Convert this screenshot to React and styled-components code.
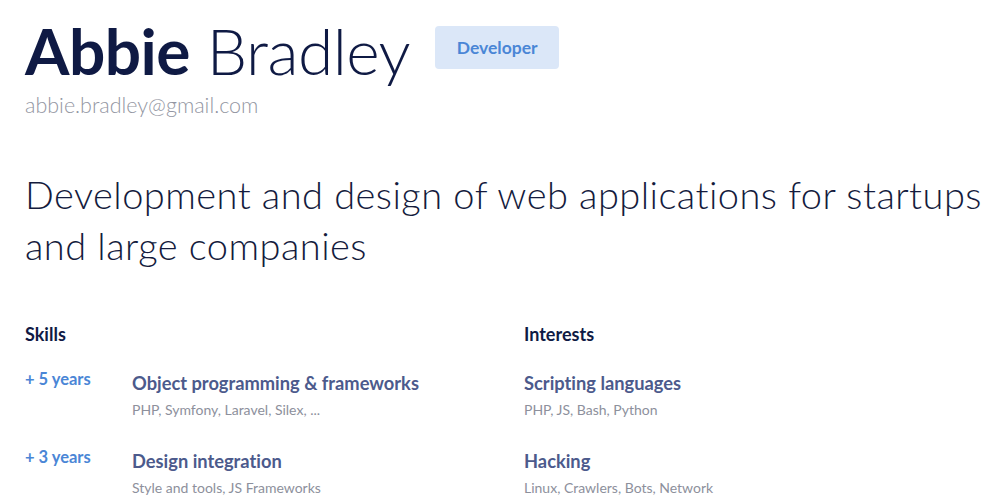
import React from "react";
import styled, { createGlobalStyle } from "styled-components";

const GlobalStyle = createGlobalStyle`
  body {
    margin: 0;
    background: #ffffff;
    font-family: Lato, "Noto Sans", sans-serif;
    font-variant-ligatures: none;
  }
`;

const skills = [
  { years: "+ 5 years", title: "Object programming & frameworks", detail: "PHP, Symfony, Laravel, Silex, ..." },
  { years: "+ 3 years", title: "Design integration", detail: "Style and tools, JS Frameworks" },
];

const interests = [
  { title: "Scripting languages", detail: "PHP, JS, Bash, Python" },
  { title: "Hacking", detail: "Linux, Crawlers, Bots, Network" },
];

const App = () => {
  return (
    <>
      <GlobalStyle />
      <Page>
        <Header>
          <Name>
            <strong>Abbie</strong> Bradley
          </Name>
          <Badge>Developer</Badge>
        </Header>
        <Email>abbie.bradley@gmail.com</Email>
        <Tagline>Development and design of web applications for startups and large companies</Tagline>
        <Columns>
          <Column>
            <Heading>Skills</Heading>
            {skills.map((s) => (
              <Row key={s.title}>
                <Years>{s.years}</Years>
                <Item>
                  <Title>{s.title}</Title>
                  <Detail>{s.detail}</Detail>
                </Item>
              </Row>
            ))}
          </Column>
          <Column>
            <Heading>Interests</Heading>
            {interests.map((i) => (
              <Row key={i.title}>
                <Item>
                  <Title>{i.title}</Title>
                  <Detail>{i.detail}</Detail>
                </Item>
              </Row>
            ))}
          </Column>
        </Columns>
      </Page>
    </>
  );
};

const Page = styled.div`
  padding: 13px 17px 0 25px;
  height: 500px;
  box-sizing: border-box;
  overflow: hidden;
`;

const Header = styled.div`
  display: flex;
  align-items: flex-start;
  gap: 25px;
`;

const Name = styled.h1`
  margin: 0;
  font-size: 64px;
  line-height: 1.2;
  font-weight: 300;
  color: #0f1a44;
  letter-spacing: -0.5px;
  strong {
    font-weight: 700;
  }
`;

const Badge = styled.span`
  margin-top: 13px;
  width: 124px;
  height: 43px;
  display: flex;
  align-items: center;
  justify-content: center;
  background: #dbe7f8;
  border-radius: 4px;
  color: #4a86d6;
  font-size: 17.5px;
  font-weight: 700;
`;

const Email = styled.div`
  margin-top: 3px;
  font-size: 21.5px;
  line-height: 1.2;
  font-weight: 300;
  color: #9396a2;
`;

const Tagline = styled.p`
  margin: 50px 0 0;
  font-size: 38px;
  line-height: 51px;
  letter-spacing: 0.45px;
  font-weight: 300;
  color: #141b3d;
`;

const Columns = styled.div`
  display: grid;
  grid-template-columns: 499px 1fr;
  margin-top: 53px;
`;

const Column = styled.div`
  display: flex;
  flex-direction: column;
  gap: 28px;
`;

const Heading = styled.h3`
  margin: 0 0 -3px;
  font-size: 18px;
  line-height: 1.2;
  font-weight: 700;
  color: #0f1a44;
`;

const Row = styled.div`
  display: flex;
  align-items: flex-start;
`;

const Years = styled.div`
  width: 107px;
  flex-shrink: 0;
  font-size: 16.5px;
  line-height: 1.2;
  font-weight: 700;
  color: #4a86d6;
`;

const Item = styled.div`
  display: flex;
  flex-direction: column;
  gap: 3px;
`;

const Title = styled.div`
  font-size: 18.3px;
  line-height: 27px;
  font-weight: 700;
  color: #4c5a8c;
`;

const Detail = styled.div`
  font-size: 14px;
  line-height: 1.4;
  color: #8d909c;
`;

export default App;
